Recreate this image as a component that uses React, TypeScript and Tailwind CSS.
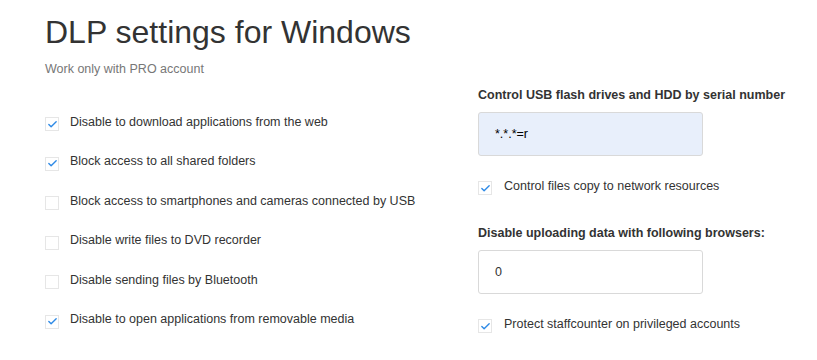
import { Check } from 'lucide-react'

const LEFT = [
  { label: 'Disable to download applications from the web', on: true },
  { label: 'Block access to all shared folders', on: true },
  { label: 'Block access to smartphones and cameras connected by USB', on: false },
  { label: 'Disable write files to DVD recorder', on: false },
  { label: 'Disable sending files by Bluetooth', on: false },
  { label: 'Disable to open applications from removable media', on: true },
]

export default function App() {
  return (
    <div className="min-h-[360px] w-[817px] bg-white pl-[45px] pt-[12px] font-['Liberation_Sans',Arial,sans-serif] text-[#333]">
      <h1 className="text-[32px] leading-[40px] text-[#333]">DLP settings for Windows</h1>
      <p className="mt-[9px] text-[12.5px] leading-[16px] text-[#777]">Work only with PRO account</p>

      <div className="grid grid-cols-[433px_1fr]">
        <div className="flex flex-col gap-[21.6px] pt-[36px]">
          {LEFT.map((item) => (
            <Box key={item.label} on={item.on} label={item.label} />
          ))}
        </div>

        <div className="flex flex-col pt-[9px]">
          <h3 className="text-[12.5px] font-bold leading-[18px]">Control USB flash drives and HDD by serial number</h3>
          <div className="mt-[8px] flex h-[44px] w-[225px] items-center rounded-[3px] border border-[#d9d9d9] bg-[#e8effb] px-[16px] text-[12.5px] text-black">
            *.*.*=r
          </div>
          <div className="mt-[21px]">
            <Box on label="Control files copy to network resources" right />
          </div>
          <h3 className="mt-[29px] text-[12.5px] font-bold leading-[18px]">Disable uploading data with following browsers:</h3>
          <div className="mt-[8px] flex h-[44px] w-[225px] items-center rounded-[3px] border border-[#d9d9d9] bg-white px-[16px] text-[12.5px] text-[#333]">
            0
          </div>
          <div className="mt-[21px]">
            <Box on label="Protect staffcounter on privileged accounts" right />
          </div>
        </div>
      </div>
    </div>
  )
}

function Box({ on, label, right }: { on: boolean; label: string; right?: boolean }) {
  return (
    <label className={`flex items-center text-[12.5px] leading-[17px] text-[#333] ${right ? 'gap-[12px]' : 'gap-[11px]'}`}>
      <span className="mt-[4px] flex h-[14px] w-[14px] shrink-0 items-center justify-center border border-[#e6e6e6] bg-white">
        {on && <Check size={11} strokeWidth={3} className="text-[#2e8ae6]" />}
      </span>
      {label}
    </label>
  )
}
